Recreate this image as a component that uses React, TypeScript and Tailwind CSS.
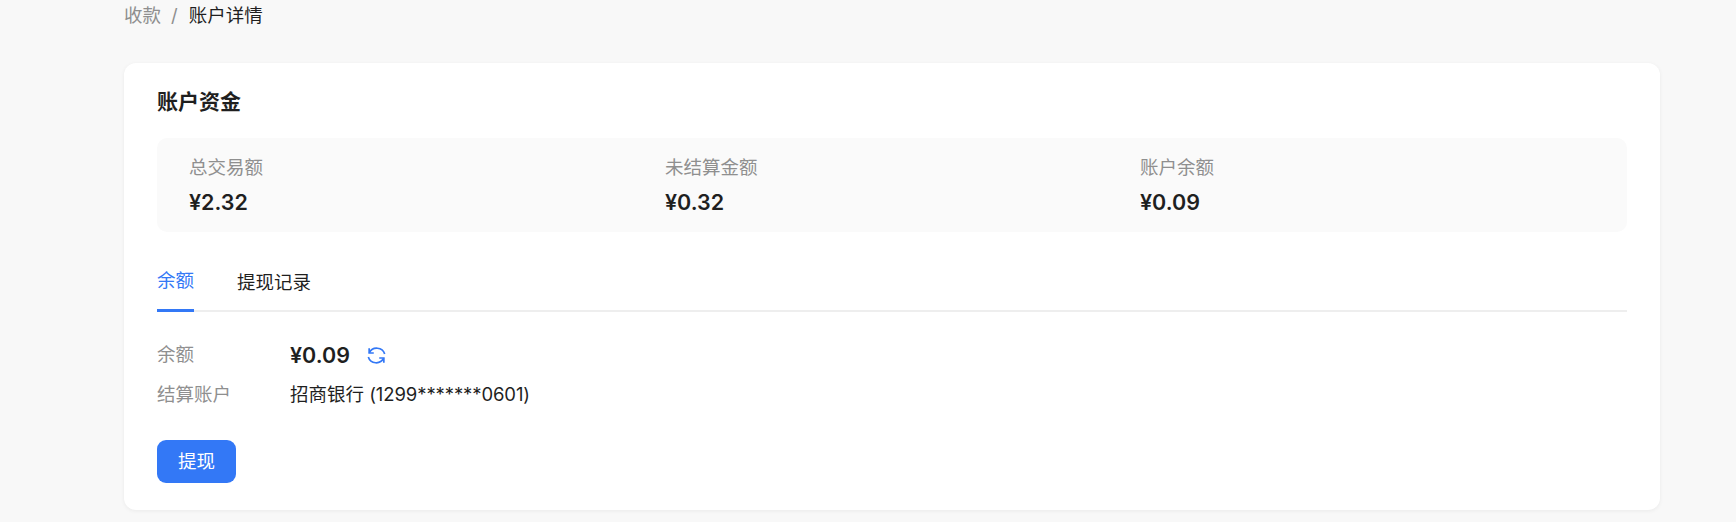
import React, { useState } from 'react';

const stats = [
  { label: '总交易额', value: '¥2.32' },
  { label: '未结算金额', value: '¥0.32' },
  { label: '账户余额', value: '¥0.09' },
];

function RefreshIcon() {
  return (
    <svg viewBox="0 0 20 20" fill="none" stroke="currentColor" strokeWidth="1.6" className="ml-[16px] h-[21px] w-[21px] text-[#3378f6]">
      <path d="M17.8 8.6A7.9 7.9 0 0 0 3.2 7.4" />
      <path d="M2.2 11.4A7.9 7.9 0 0 0 16.8 12.6" />
      <path d="M3 3.2V7.6H7.4" />
      <path d="M17 16.8V12.4H12.6" />
    </svg>
  );
}

export default function App() {
  const [tab, setTab] = useState('balance');

  return (
    <div className="h-[522px] overflow-hidden bg-[#f8f8f8] pl-[124px] pr-[76px] font-['Inter','Noto_Sans_CJK_SC',sans-serif] text-[#1f1f1f]">
      {/* Breadcrumb */}
      <div className="flex h-[63px] items-start pt-[2px] text-[18.5px] leading-[27px]">
        <span className="text-[#8f8f8f]">收款</span>
        <span className="ml-[10px] mr-[11px] text-[#8f8f8f]">/</span>
        <span>账户详情</span>
      </div>

      {/* Card */}
      <div className="h-[447px] rounded-[12px] bg-white px-[33px] pt-[23px] shadow-[0_1px_4px_rgba(0,0,0,0.06)]">
        <h1 className="text-[21px] leading-[32px] font-semibold">账户资金</h1>

        <div className="mt-[20px] grid h-[94px] grid-cols-[476px_475px_1fr] items-center rounded-[10px] bg-[#fafafa] px-[32px] pt-[2px]">
          {stats.map((item) => (
            <div key={item.label}>
              <div className="text-[18.5px] leading-[27px] text-[#8f8f8f]">{item.label}</div>
              <div className="mt-[5px] text-[21.5px] leading-[32px] font-semibold">{item.value}</div>
            </div>
          ))}
        </div>

        {/* Tabs */}
        <div className="mt-[14px] flex h-[66px] gap-[43px] border-b-2 border-[#eeeeee] text-[18.5px]">
          <button
            onClick={() => setTab('balance')}
            className={tab === 'balance' ? '-mb-[2px] h-[66px] border-b-[3px] border-[#3378f6] pt-[7px] text-[#3378f6]' : '-mb-[2px] h-[66px] pt-[7px]'}
          >
            余额
          </button>
          <button
            onClick={() => setTab('records')}
            className={tab === 'records' ? '-mb-[2px] h-[66px] border-b-[3px] border-[#3378f6] pt-[7px] text-[#3378f6]' : '-mb-[2px] h-[66px] pt-[7px]'}
          >
            提现记录
          </button>
        </div>

        {/* Details */}
        <div className="mt-[23px] flex h-[40px] items-center">
          <div className="w-[133px] text-[18.5px] text-[#8f8f8f]">余额</div>
          <div className="text-[21.5px] font-semibold">¥0.09</div>
          <RefreshIcon />
        </div>
        <div className="flex h-[39px] items-center">
          <div className="w-[133px] text-[18.5px] text-[#8f8f8f]">结算账户</div>
          <div className="text-[18.5px]">
            招商银行 <span className="tracking-[-0.1px]">(1299*******0601)</span>
          </div>
        </div>

        <button className="mt-[26px] h-[43px] w-[79px] rounded-[9px] bg-[#3378f6] text-[18.5px] text-white">提现</button>
      </div>
    </div>
  );
}
